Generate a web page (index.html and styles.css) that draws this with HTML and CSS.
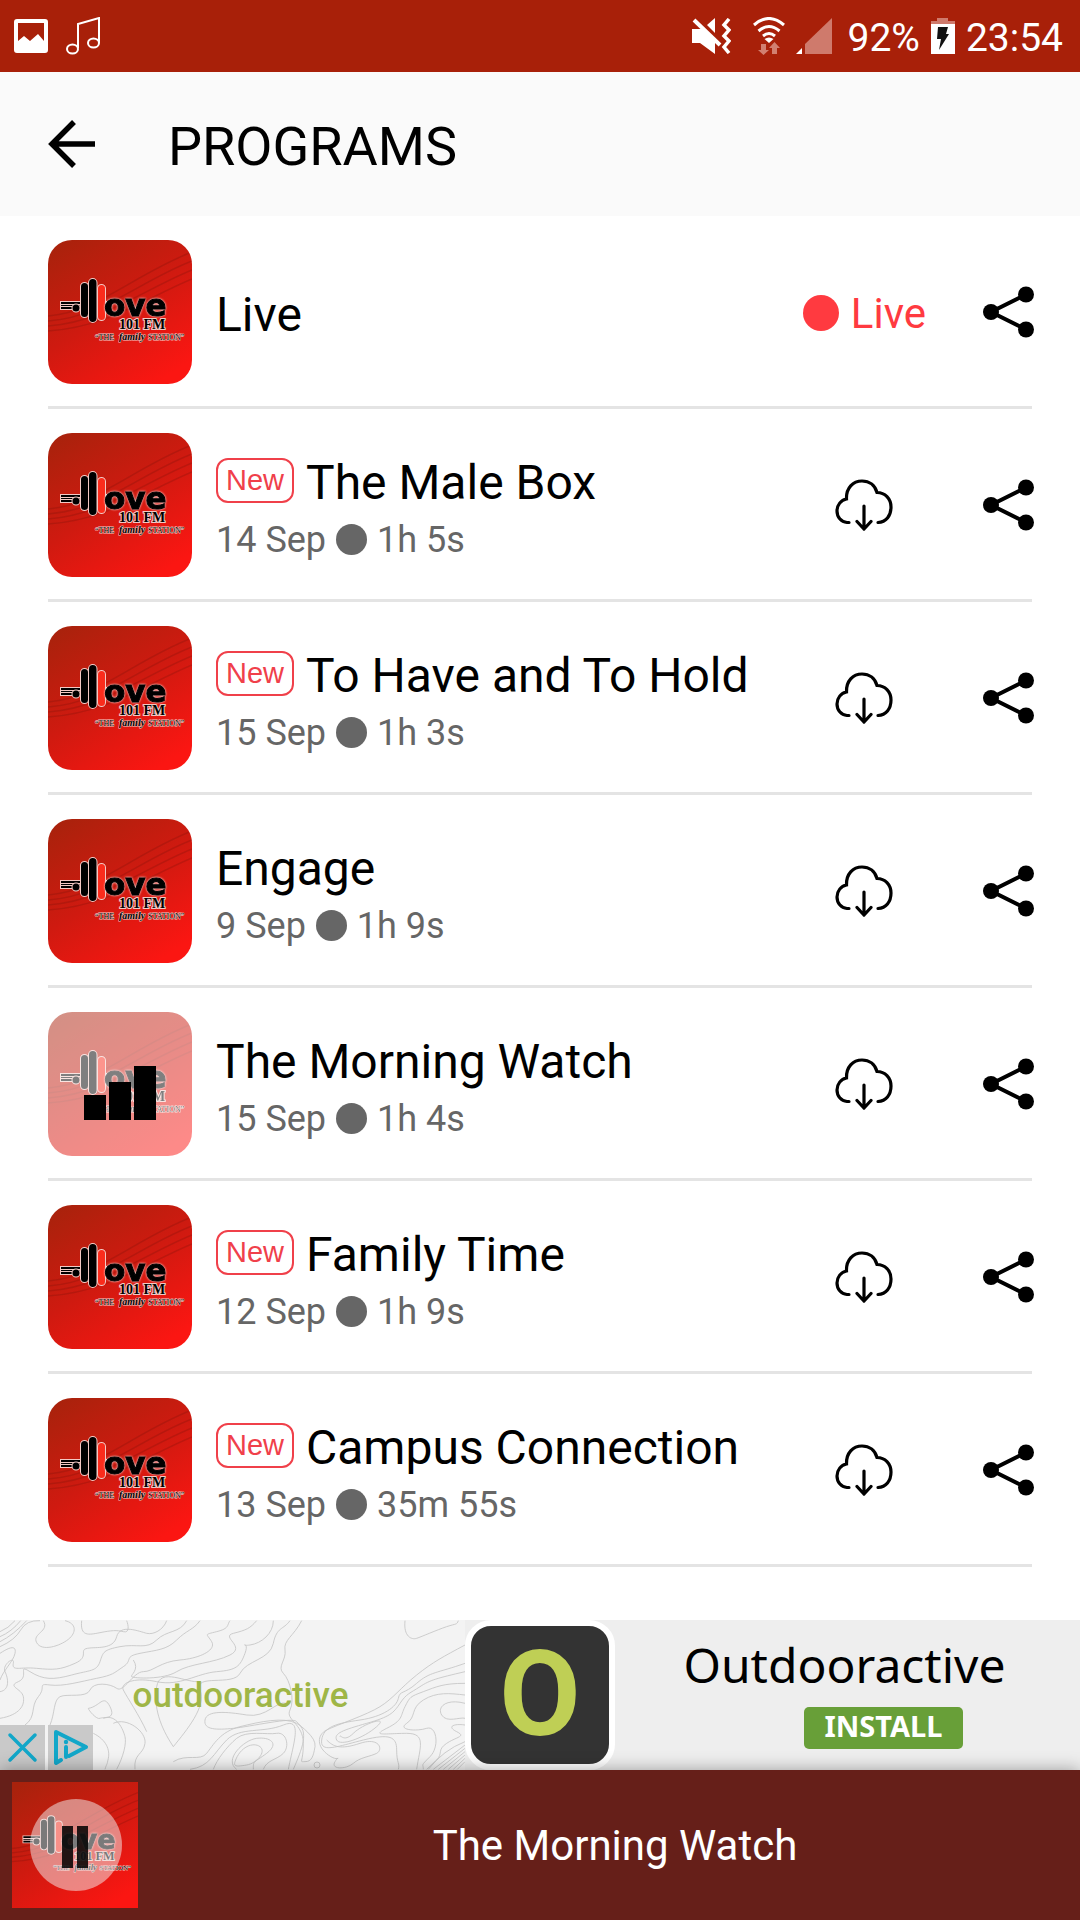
FILE: index.html
```html
<!DOCTYPE html>
<html lang="en">
<head>
    <meta charset="UTF-8" />
    <meta name="viewport" content="width=device-width, initial-scale=1.0">
    <title>Programs</title>
    <link rel="stylesheet" href="styles.css">
</head>
<body>
    <!-- shared icons -->
    <svg class="sprite" aria-hidden="true">
        <symbol id="share" viewBox="0 0 52 52">
            <path d="M43 8.500L8 26l35 17.500" fill="none" stroke="#000" stroke-width="4" />
            <circle cx="43" cy="8.500" r="8" />
            <circle cx="8" cy="26" r="8" />
            <circle cx="43" cy="43.500" r="8" />
        </symbol>
        <symbol id="cloud" viewBox="0 0 58 52">
            <g fill="none" stroke="#000" stroke-width="3.200" stroke-linecap="round">
                <path d="M14 43.500h-2C6 43 2 38 2 32c0-6 4-11 9.500-12C11 9 18 2 27 2c7.500 0 13 4.500 15 11.500 8 0 14 6 14 14.500 0 9-5 15-13 15.500" />
                <path d="M29 27v23M22 42.500l7 7.500 7-7.500" />
            </g>
        </symbol>
    </svg>

    <div class="status">
        <div class="status-group">
            <svg width="34" height="34" viewBox="0 0 34 34">
                <path fill="#fff" fill-rule="evenodd" d="M3 0h28q3 0 3 3v28q0 3-3 3H3q-3 0-3-3V3q0-3 3-3zM4 4v18l6-5 6 5 8-7 6 7V4z" />
            </svg>
            <svg width="36" height="38" viewBox="0 0 36 38" fill="none" stroke="#fff" stroke-width="2">
                <path d="M12 31V7l21-6v25" />
                <ellipse cx="6.500" cy="32" rx="5.500" ry="4.500" />
                <ellipse cx="27.500" cy="26" rx="5.500" ry="4.500" />
            </svg>
        </div>
        <div class="status-group status-right">
            <svg class="mute" width="39" height="36" viewBox="0 0 39 36">
                <path fill="#fff" d="M0 11h10l13 13v12L8 25H0zM15 7l8-7v15z" />
                <path d="M2 2l26 25" stroke="#fff" stroke-width="4" />
                <path d="M37 1l-5 6 5 5-5 6 5 5-5 6 5 6" fill="none" stroke="#fff" stroke-width="3.500" />
            </svg>
            <svg class="wifi" width="32" height="38" viewBox="0 0 32 38">
                <g fill="none" stroke="#fff" stroke-width="3">
                    <path d="M1 8q15-13 30 0M5.500 14q10.500-9 21 0M10 19q6-5 12 0" />
                </g>
                <path fill="#fff" d="M11.500 22q4.500-3 9 0L16 26z" />
                <path fill="#d27f70" d="M8 27h5v6h3l-5.500 5L5 33h3zM19 37h5v-6h3l-5.500-6-5.500 6h3z" />
            </svg>
            <svg class="signal" width="36" height="36" viewBox="0 0 36 36">
                <path fill="#fff" d="M0 36l6-6v6z" />
                <path fill="#cf7a6c" d="M9 26L36 0v36H9z" />
            </svg>
            <span>92%</span>
            <svg class="battery" width="24" height="36" viewBox="0 0 24 36">
                <path fill="#cf7a6c" d="M6 0h11v3h7v3H0V3h6z" />
                <path fill="#fff" d="M0 6h24v30H0z" />
                <path fill="#111" d="M7 9h10l-2 7h3L8 32l2-11H6z" />
            </svg>
            <span>23:54</span>
        </div>
    </div>

    <header class="header">
        <button class="back" type="button" aria-label="Back">
            <svg width="48" height="48" viewBox="0 0 48 48" fill="none" stroke="#000" stroke-width="5.500">
                <path d="M47 24H4M26 2L4 24l22 22" />
            </svg>
        </button>
        <h1>PROGRAMS</h1>
    </header>

    <main class="programs">
        <article class="program">
            <!-- station artwork, reused by every row below -->
            <svg class="art">
                <defs>
                    <linearGradient id="artFill" x1="0.1" y1="0" x2="0.75" y2="1">
                        <stop offset="0" stop-color="#a9220c" />
                        <stop offset="0.5" stop-color="#cf1a10" />
                        <stop offset="1" stop-color="#fb1612" />
                    </linearGradient>
                </defs>
                <g id="art">
                    <rect width="144" height="144" fill="url(#artFill)" />
                    <g fill="none" stroke="#7a120a" stroke-opacity="0.28" stroke-width="1.5">
                        <path d="M0 76C50 72 85 35 144 12" />
                        <path d="M0 81C55 77 90 42 144 21" />
                        <path d="M0 86C55 82 95 50 144 30" />
                        <path d="M0 91C60 87 98 58 144 39" />
                    </g>
                    <g fill="#000" stroke="#f3c9c4" stroke-width="2" paint-order="stroke">
                        <path d="M13 62h45v2H13zM13 65h45v1H13zM13 67h45v2H13z" />
                        <circle cx="28" cy="68" r="3.5" />
                        <rect x="50" y="45" width="7" height="35" rx="3.5" fill="#fb2c1c" />
                        <rect x="33" y="43" width="7" height="34" rx="3.5" />
                        <rect x="41" y="39" width="7.500" height="43" rx="3.700" />
                        <text class="art-name" x="56" y="76">ove</text>
                        <text class="art-freq" x="71" y="89">101 FM</text>
                        <text class="art-tag" x="47" y="100">“THE</text>
                        <text class="art-script" x="71" y="100">family</text>
                        <text class="art-tag" x="100" y="100">STATION”</text>
                    </g>
                </g>
            </svg>
            <div class="info">
                <h2>Live</h2>
            </div>
            <span class="live"><i class="live-dot"></i>Live</span>
            <button class="icon-btn share" type="button" aria-label="Share"><svg width="52" height="52"><use href="#share" /></svg></button>
        </article>

        <article class="program">
            <svg class="art"><use href="#art" /></svg>
            <div class="info">
                <h2><span class="badge">New</span>The Male Box</h2>
                <p>14 Sep<i class="dot"></i>1h 5s</p>
            </div>
            <button class="icon-btn" type="button" aria-label="Download"><svg width="58" height="52"><use href="#cloud" /></svg></button>
            <button class="icon-btn share" type="button" aria-label="Share"><svg width="52" height="52"><use href="#share" /></svg></button>
        </article>

        <article class="program">
            <svg class="art"><use href="#art" /></svg>
            <div class="info">
                <h2><span class="badge">New</span>To Have and To Hold</h2>
                <p>15 Sep<i class="dot"></i>1h 3s</p>
            </div>
            <button class="icon-btn" type="button" aria-label="Download"><svg width="58" height="52"><use href="#cloud" /></svg></button>
            <button class="icon-btn share" type="button" aria-label="Share"><svg width="52" height="52"><use href="#share" /></svg></button>
        </article>

        <article class="program">
            <svg class="art"><use href="#art" /></svg>
            <div class="info">
                <h2>Engage</h2>
                <p>9 Sep<i class="dot"></i>1h 9s</p>
            </div>
            <button class="icon-btn" type="button" aria-label="Download"><svg width="58" height="52"><use href="#cloud" /></svg></button>
            <button class="icon-btn share" type="button" aria-label="Share"><svg width="52" height="52"><use href="#share" /></svg></button>
        </article>

        <article class="program">
            <svg class="art" viewBox="0 0 144 144">
                <use href="#art" opacity="0.5" />
                <path d="M36 83h22v25H36zM61 70h22v38H61zM86 54h22v54H86z" />
            </svg>
            <div class="info">
                <h2>The Morning Watch</h2>
                <p>15 Sep<i class="dot"></i>1h 4s</p>
            </div>
            <button class="icon-btn" type="button" aria-label="Download"><svg width="58" height="52"><use href="#cloud" /></svg></button>
            <button class="icon-btn share" type="button" aria-label="Share"><svg width="52" height="52"><use href="#share" /></svg></button>
        </article>

        <article class="program">
            <svg class="art"><use href="#art" /></svg>
            <div class="info">
                <h2><span class="badge">New</span>Family Time</h2>
                <p>12 Sep<i class="dot"></i>1h 9s</p>
            </div>
            <button class="icon-btn" type="button" aria-label="Download"><svg width="58" height="52"><use href="#cloud" /></svg></button>
            <button class="icon-btn share" type="button" aria-label="Share"><svg width="52" height="52"><use href="#share" /></svg></button>
        </article>

        <article class="program">
            <svg class="art"><use href="#art" /></svg>
            <div class="info">
                <h2><span class="badge">New</span>Campus Connection</h2>
                <p>13 Sep<i class="dot"></i>35m 55s</p>
            </div>
            <button class="icon-btn" type="button" aria-label="Download"><svg width="58" height="52"><use href="#cloud" /></svg></button>
            <button class="icon-btn share" type="button" aria-label="Share"><svg width="52" height="52"><use href="#share" /></svg></button>
        </article>
    </main>

    <aside class="ad">
        <div class="ad-brand">
            <!-- contour lines -->
            <svg class="contours" viewBox="0 60 1395 450" preserveAspectRatio="xMinYMin slice" fill="none" stroke="#c4c4c4" stroke-width="2.500">
                <path d="M0 95Q25 85 45 62M0 110Q35 95 62 62M0 125Q40 105 80 62M0 140Q45 120 62 90T120 62" />
                <path d="M130 62C150 95 95 100 110 128S180 138 205 118 230 70 195 62" />
                <path d="M245 62C240 110 265 105 300 98S350 90 370 95 385 75 380 62" />
                <path d="M0 160C30 140 50 135 45 160S10 210 0 240" />
                <path d="M0 275C30 270 25 235 15 215S45 165 40 190 60 200 110 205 180 210 225 190 235 150 262 145 340 150 350 110 420 95 440 100 490 90 500 62" />
                <path d="M0 355C60 345 75 315 70 290S20 260 55 245 50 190 90 215 160 240 215 225 290 215 300 185 310 150 360 140 440 150 470 120 540 100 560 62" />
                <path d="M75 375C110 350 90 320 115 290S110 250 150 255 240 245 290 235 340 220 370 200 370 170 420 160 500 150 530 120 580 90 600 62" />
                <path d="M150 375C165 340 160 300 180 290S260 295 270 270 330 250 350 265 400 215 430 215 480 185 540 180 650 150 635 125 610 105 650 95 680 75 690 62" />
                <path d="M400 180C420 210 390 225 395 230S490 240 530 215 640 190 690 165 660 110 700 100 750 85 770 62" />
                <path d="M440 395C420 350 380 290 370 270S400 230 470 245 590 220 650 215 720 200 735 160 715 140 750 135 820 100 820 62" />
                <path d="M520 440C480 380 460 320 470 260S560 250 600 245M520 440C560 390 620 320 600 270S700 260 720 220 810 180 820 130 850 90 870 62" />
                <path d="M905 62C880 110 850 120 855 150S830 200 850 220 885 300 870 330 910 370 910 430 895 485 915 485 940 470 945 440 900 380 890 365 750 380 700 385 610 390 615 360 680 335 740 345 830 300 860 310" />
                <path d="M265 325C300 320 310 280 330 320S310 350 300 355 265 330 265 325M310 355C350 340 370 390 375 410S370 470 350 508" />
                <path d="M340 370C380 350 440 395 435 430S400 460 405 508M280 400C320 420 330 450 325 475S320 490 315 508" />
                <path d="M520 485C560 460 600 485 620 460S660 395 720 380 850 350 890 370 905 450 880 508" />
                <path d="M570 508C630 500 640 460 680 420S790 400 850 375 880 430 865 508M640 508C650 480 680 440 710 415S800 405 830 400 870 440 850 460 800 480 790 508" />
                <path d="M710 508C670 480 730 420 770 415S840 430 800 460 760 480 760 508M705 485C720 440 760 425 780 440S770 490 740 495 700 500 705 485" />
                <path d="M1215 62C1210 110 1235 120 1250 115S1310 90 1340 80 1370 75 1375 62" />
                <path d="M1395 135C1330 170 1300 185 1250 225S1180 295 1140 320 1010 375 980 390 950 440 985 465 1020 460 1005 485 1040 508 1060 490 1110 470 1130 460 1140 410 1080 430 1000 440 980 420" />
                <path d="M1395 190C1310 220 1290 215 1250 250S1200 270 1195 295 1150 350 1080 360 970 380 965 420 1010 440 1090 420 1190 410 1190 450 1200 490 1195 508" />
                <path d="M1395 215C1310 235 1290 240 1260 260S1220 280 1200 310 1170 350 1100 370 1000 400 1010 420 1090 415 1130 380 1090 370 1060 400 1020 400 1020 410" />
                <path d="M1395 250C1330 250 1310 260 1270 275S1230 290 1215 320 1210 360 1160 385 1160 400 1220 400 1260 440 1250 508" />
                <path d="M1395 285C1350 280 1310 275 1270 300S1250 350 1220 370 1250 395 1280 385 1320 440 1290 470 1270 490 1270 508" />
                <path d="M1395 310C1340 295 1310 320 1325 345S1380 350 1395 355M1395 375C1360 370 1340 380 1370 395S1370 410 1340 430 1330 460 1310 480L1280 508" />
                <path d="M1395 435L1300 508M1395 445L1315 508M1395 455L1330 508M1395 465L1345 508M1395 475L1360 508M1395 485L1372 508M1395 425Q1330 450 1285 508" />
                <circle cx="951" cy="495" r="9" />
            </svg>
            <span class="ad-name">outdooractive</span>
            <div class="ad-controls">
                <button type="button" aria-label="Close ad">
                    <svg width="45" height="45" viewBox="0 0 45 45" fill="none" stroke="#12a7c9" stroke-width="3.500" stroke-linecap="round">
                        <path d="M10 10l25 25M35 10L10 35" />
                    </svg>
                </button>
                <button type="button" aria-label="Ad info">
                    <svg width="45" height="45" viewBox="0 0 45 45" fill="none" stroke="#12a7c9" stroke-width="4" stroke-linejoin="round" stroke-linecap="round">
                        <path d="M13 35l-5 3V7l30 15-17 9" />
                        <path d="M18 22v10" />
                        <circle cx="18" cy="17" r="2.200" fill="#12a7c9" stroke="none" />
                    </svg>
                </button>
            </div>
        </div>
        <div class="ad-icon">O</div>
        <div class="ad-text">
            <span class="ad-title">Outdooractive</span>
            <button class="install" type="button">INSTALL</button>
        </div>
    </aside>

    <footer class="player">
        <button class="player-art" type="button" aria-label="Pause">
            <svg width="126" height="126" viewBox="0 0 126 126">
                <use href="#art" transform="scale(0.875)" />
                <circle cx="64" cy="63" r="46" fill="#f4f4f4" fill-opacity="0.5" />
                <path d="M50 44h11v42H50zM65 44h11v42H65z" fill-opacity="0.85" />
            </svg>
        </button>
        <span class="player-title">The Morning Watch</span>
    </footer>
</body>
</html>
```

FILE: styles.css
```css
* {
    box-sizing: border-box;
}

body {
    font-family: Roboto, "Liberation Sans", sans-serif;
    margin: 0;
    min-height: 100vh;
    display: flex;
    flex-direction: column;
    background-color: #fff;
    color: #000;
}

h1,
h2,
p {
    margin: 0;
    font-weight: normal;
}

svg {
    display: block;
}

button {
    padding: 0;
    border: none;
    background: none;
    cursor: pointer;
}

.sprite {
    position: absolute;
    width: 0;
    height: 0;
}

/* status bar */
.status {
    height: 72px;
    padding: 0 17px 0 14px;
    display: flex;
    justify-content: space-between;
    align-items: center;
    background-color: #a82009;
    color: #fff;
    font-size: 39px;
}

.status span {
    padding-top: 3px;
}

.status-group {
    display: flex;
    align-items: center;
    gap: 18px;
}

.status-right {
    gap: 11px;
}

.mute {
    margin-right: 11px;
}

.signal {
    margin-right: 4px;
}

/* header */
.header {
    height: 144px;
    padding: 0 48px;
    display: flex;
    align-items: center;
    gap: 72px;
    background-color: #fafafa;
}

.header h1 {
    font-size: 54px;
    line-height: 64px;
    padding-top: 6px;
}

/* programs */
.programs {
    flex: 1;
    padding: 0 48px 53px;
}

.program {
    display: flex;
    align-items: center;
    padding: 24px 0 22px;
    border-bottom: 3px solid #e4e4e4;
}

.art {
    width: 144px;
    height: 144px;
    border-radius: 24px;
    flex-shrink: 0;
}

.art-name {
    font: bold 31px "DejaVu Sans", sans-serif;
    stroke: #000;
    stroke-width: 1px;
    filter: drop-shadow(0 0 1px #fff);
}

.art-freq {
    font: bold 14px "Liberation Serif", serif;
}

.art-tag {
    font: 8px "Liberation Serif", serif;
    stroke-width: 1px;
}

.art-script {
    font: italic bold 10px "Liberation Serif", serif;
    stroke-width: 1px;
}

.info {
    flex: 1;
    margin-left: 24px;
    padding-top: 5px;
}

.info h2 {
    display: flex;
    align-items: center;
    font-size: 48px;
    line-height: 56px;
}

.info p {
    display: flex;
    align-items: center;
    margin-top: 8px;
    font-size: 36px;
    line-height: 42px;
    color: #666;
}

.badge {
    height: 45px;
    margin: 0 12px 4px 0;
    padding: 0 8px;
    border: 2px solid #f0404a;
    border-radius: 12px;
    color: #f0404a;
    font-family: "Liberation Sans", Arial, sans-serif;
    font-size: 29px;
    line-height: 41px;
}

.dot {
    width: 31px;
    height: 31px;
    margin: 0 10px;
    border-radius: 50%;
    background-color: #666;
}

.live {
    display: flex;
    align-items: center;
    gap: 12px;
    padding-top: 2px;
    font-size: 42px;
    color: #ff3a40;
}

.live-dot {
    width: 36px;
    height: 36px;
    border-radius: 50%;
    background-color: #ff3a40;
}

.share {
    margin: 0 -3px 0 90px;
}

.live + .share {
    margin-left: 57px;
}

/* ad banner */
.ad {
    display: flex;
    height: 150px;
    background-color: #eee;
}

.ad-brand {
    position: relative;
    flex: 1;
    display: flex;
    align-items: center;
    justify-content: center;
    background-color: #f3f3f3;
}

.contours {
    position: absolute;
    top: 0;
    left: 0;
    width: 100%;
    height: 100%;
}

.ad-name {
    position: relative;
    margin-left: 16px;
    font-size: 35px;
    font-weight: 500;
    color: #9fb647;
}

.ad-controls {
    position: absolute;
    left: 0;
    bottom: 0;
    display: flex;
    gap: 3px;
}

.ad-controls button {
    background-color: #c9c9c9;
}

.ad-icon {
    width: 150px;
    border: 6px solid #fff;
    border-radius: 26px;
    background-color: #333;
    color: #bfcf55;
    font: bold 118px "Liberation Sans Narrow", Roboto, sans-serif;
    line-height: 138px;
    text-align: center;
}

.ad-text {
    flex: 1;
    display: flex;
    flex-direction: column;
    align-items: center;
    font-family: "Noto Sans", "Open Sans", sans-serif;
}

.ad-title {
    margin: 12px 6px 0 0;
    font-size: 48px;
    line-height: 66px;
}

.install {
    width: 159px;
    height: 42px;
    margin: 9px 0 0 72px;
    padding-bottom: 4px;
    border-radius: 5px;
    background-color: #689f38;
    color: #fff;
    font-family: inherit;
    font-size: 29px;
    font-weight: bold;
    line-height: 38px;
}

/* player */
.player {
    position: relative;
    height: 150px;
    padding-left: 12px;
    display: flex;
    align-items: center;
    background-color: #661f19;
    box-shadow: 0 0 16px rgba(0, 0, 0, 0.35);
    color: #fff;
}

.player-title {
    flex: 1;
    margin-left: 12px;
    text-align: center;
    font-size: 42px;
}
```
